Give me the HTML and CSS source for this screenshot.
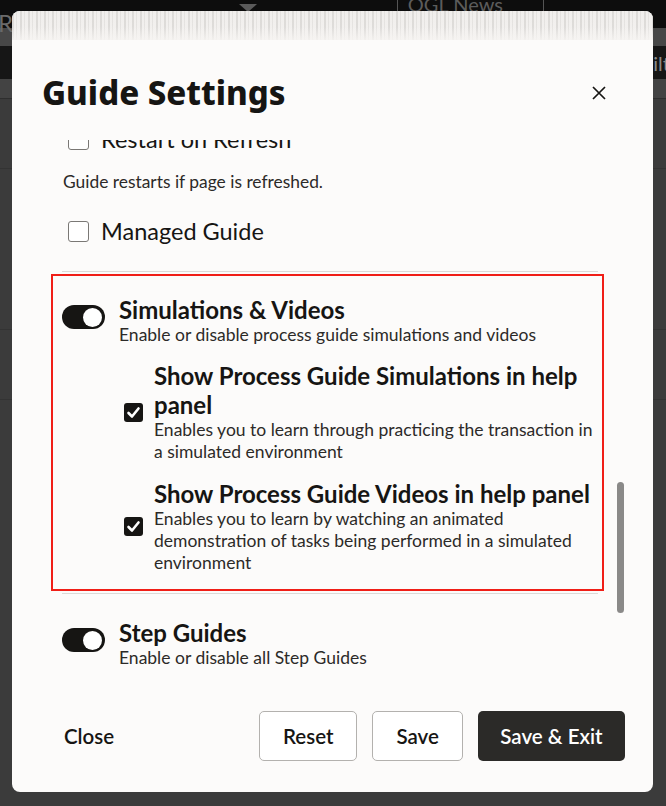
FILE: index.html
```html
<!DOCTYPE html>
<html lang="en">
  <head>
    <meta charset="UTF-8" />
    <meta name="viewport" content="width=device-width, initial-scale=1.0" />
    <title>Guide Settings</title>
    <link rel="stylesheet" href="styles.css">
  </head>
  <body>
    <div class="page">
      <div class="page-topbar">
        <span class="page-app">Ra</span>
        <span class="page-caret"></span>
        <span class="page-news">OGL News</span>
      </div>
      <div class="page-strip"></div>
      <div class="page-toolbar"><span class="page-filter">ilt</span></div>
      <div class="page-tabs"></div>
      <div class="page-row"></div>
      <div class="page-row page-row-dark"></div>
      <div class="page-row"></div>
    </div>

    <div class="modal" role="dialog" aria-labelledby="modalTitle">
      <div class="modal-pattern"></div>

      <header class="modal-header">
        <h1 id="modalTitle">Guide Settings</h1>
        <button class="icon-button" aria-label="Close">
          <svg width="14" height="14" viewBox="0 0 14 14"><path d="M1 1 L13 13 M13 1 L1 13" stroke="#161513" stroke-width="1.7" fill="none"/></svg>
        </button>
      </header>

      <div class="modal-body">
        <div class="settings">
          <div class="setting">
            <label class="check-row">
              <span class="checkbox"></span>
              Restart on Refresh
            </label>
            <p class="hint">Guide restarts if page is refreshed.</p>
          </div>

          <div class="setting setting-managed">
            <label class="check-row">
              <span class="checkbox"></span>
              Managed Guide
            </label>
          </div>

          <div class="section">
            <div class="highlight">
              <div class="toggle-row">
                <span class="toggle on"></span>
                <div>
                  <div class="setting-title">Simulations &amp; Videos</div>
                  <div class="setting-desc">Enable or disable process guide simulations and videos</div>
                </div>
              </div>

              <div class="sub-settings">
                <div class="sub-setting">
                  <span class="checkbox checked"></span>
                  <div>
                    <div class="setting-title">Show Process Guide Simulations in help panel</div>
                    <div class="setting-desc">Enables you to learn through practicing the transaction in a simulated environment</div>
                  </div>
                </div>
                <div class="sub-setting">
                  <span class="checkbox checked"></span>
                  <div>
                    <div class="setting-title">Show Process Guide Videos in help panel</div>
                    <div class="setting-desc">Enables you to learn by watching an animated demonstration of tasks being performed in a simulated environment</div>
                  </div>
                </div>
              </div>
            </div>
          </div>

          <div class="toggle-row step-guides">
            <span class="toggle on"></span>
            <div>
              <div class="setting-title">Step Guides</div>
              <div class="setting-desc">Enable or disable all Step Guides</div>
            </div>
          </div>
        </div>

        <div class="scroll-thumb"></div>
      </div>

      <footer class="modal-footer">
        <button class="btn btn-text">Close</button>
        <div class="footer-actions">
          <button class="btn btn-outline">Reset</button>
          <button class="btn btn-outline">Save</button>
          <button class="btn btn-primary">Save &amp; Exit</button>
        </div>
      </footer>
    </div>
  </body>
</html>
```

FILE: styles.css
```css
body {
  margin: 0;
  height: 806px;
  overflow: hidden;
  background: #3b3b3b;
  font-family: 'Lato', 'Liberation Sans', sans-serif;
  color: #161513;
}

/* page behind the dialog */
.page-topbar {
  height: 28px;
  background: #0d0d0d;
  display: flex;
  align-items: flex-start;
  color: #6a6a6a;
  font-size: 24px;
}

.page-app {
  margin-top: 8px;
  margin-left: -2px;
}

.page-caret {
  margin-left: 214px;
  margin-top: 4px;
  border-left: 9px solid transparent;
  border-right: 9px solid transparent;
  border-top: 8px solid #5a5a5a;
}

.page-news {
  margin-left: 140px;
  margin-top: -8px;
  padding: 0 40px 0 10px;
  border-left: 1px solid #555;
  border-right: 1px solid #555;
  font-size: 20px;
  color: #5c5c5c;
}

.page-strip {
  height: 18px;
  background: #474747;
}

.page-toolbar {
  height: 33px;
  background: #161616;
  display: flex;
  justify-content: flex-end;
  align-items: center;
  color: #8a8a8a;
  font-size: 20px;
}

.page-filter {
  margin-right: -4px;
}

.page-tabs {
  height: 19px;
  background: #434343;
  border-bottom: 1px solid #2e2e2e;
}

.page-row {
  height: 69px;
  border-bottom: 1px solid #333;
}

.page-row-dark {
  height: 160px;
}

/* dialog */
.modal {
  position: absolute;
  left: 12px;
  top: 11px;
  width: 641px;
  height: 781px;
  background: #fcfbfa;
  border-radius: 8px;
  overflow: hidden;
  display: flex;
  flex-direction: column;
}

.modal-pattern {
  height: 29px;
  flex-shrink: 0;
  background:
    linear-gradient(rgba(246, 244, 242, 0) 55%, rgba(246, 244, 242, 0.85) 100%),
    repeating-linear-gradient(90deg, rgba(208, 206, 203, 0.6) 0 2px, transparent 2px 4px, rgba(214, 212, 209, 0.45) 4px 5px, transparent 5px 8px),
    linear-gradient(#f0eeec, #f4f2f0);
}

.modal-header {
  display: flex;
  align-items: center;
  justify-content: space-between;
  padding: 33px 43px 27px 30px;
}

h1 {
  margin: 0;
  font-family: 'Noto Sans', 'Lato', sans-serif;
  font-size: 33px;
  line-height: 40px;
  font-weight: 800;
}

.icon-button {
  border: none;
  background: none;
  padding: 4px;
  display: flex;
  cursor: pointer;
}

.modal-body {
  flex: 1;
  position: relative;
  overflow: hidden;
  padding: 0 55px 0 50px;
}

.settings {
  margin-top: -16px;
}

.check-row {
  display: flex;
  align-items: center;
  gap: 12px;
  height: 30px;
  padding-left: 6px;
  font-size: 23.5px;
}

.checkbox {
  width: 19px;
  height: 19px;
  flex-shrink: 0;
  border: 1.5px solid #7a7875;
  border-radius: 3px;
  background: #fff;
}

.checkbox.checked {
  width: 19px;
  height: 19px;
  border: none;
  background: #161513 url("data:image/svg+xml;utf8,<svg xmlns='http://www.w3.org/2000/svg' viewBox='0 0 19 19'><path d='M4.5 10 L8 13.5 L14.5 5.5' stroke='white' stroke-width='2.6' fill='none' stroke-linecap='round' stroke-linejoin='round'/></svg>") center / 19px 19px no-repeat;
}

.hint {
  margin: 17px 0 0 1px;
  font-size: 17.4px;
  line-height: 22px;
  color: #2c2a28;
}

.setting-managed {
  margin-top: 23px;
}

.section {
  margin-top: 25px;
  border-top: 1px solid #dcdad7;
  border-bottom: 1px solid #dcdad7;
  padding: 2px 0;
}

.highlight {
  margin: 0 -6px 0 -11px;
  padding: 19px 6px 15px 9px;
  border: 2px solid #f01e17;
}

.toggle-row {
  display: flex;
  align-items: flex-start;
  gap: 14px;
}

.toggle {
  width: 43px;
  height: 24px;
  margin-top: 10px;
  flex-shrink: 0;
  border-radius: 12px;
  background: #161513;
  display: flex;
  align-items: center;
  justify-content: flex-end;
  padding-right: 3px;
  box-sizing: border-box;
}

.toggle.on::after {
  content: "";
  width: 19px;
  height: 19px;
  border-radius: 50%;
  background: #fff;
}

.setting-title {
  font-size: 24px;
  line-height: 29px;
  font-weight: 700;
}

.setting-desc {
  font-size: 17.5px;
  line-height: 22px;
  color: #2c2a28;
}

.sub-settings {
  margin-top: 15px;
  padding-left: 62px;
  display: flex;
  flex-direction: column;
  gap: 16px;
}

.sub-setting {
  display: flex;
  align-items: center;
  gap: 11px;
}

.step-guides {
  padding-top: 24px;
}

.scroll-thumb {
  position: absolute;
  top: 342px;
  right: 29px;
  width: 7px;
  height: 131px;
  border-radius: 4px;
  background: #8a8988;
}

.modal-footer {
  display: flex;
  align-items: center;
  justify-content: space-between;
  padding: 20px 28px 31px 28px;
}

.footer-actions {
  display: flex;
  gap: 15px;
}

.btn {
  height: 50px;
  padding: 0 23px;
  border-radius: 5px;
  font-family: inherit;
  font-size: 20.5px;
  font-weight: 600;
  color: #161513;
  cursor: pointer;
}

.btn-text {
  border: none;
  background: none;
  padding: 0 24px;
}

.btn-outline {
  border: 1px solid #b3b1ae;
  background: #fff;
}

.btn-primary {
  border: none;
  background: #2b2a28;
  color: #fff;
  padding: 0 22.5px;
}
```
